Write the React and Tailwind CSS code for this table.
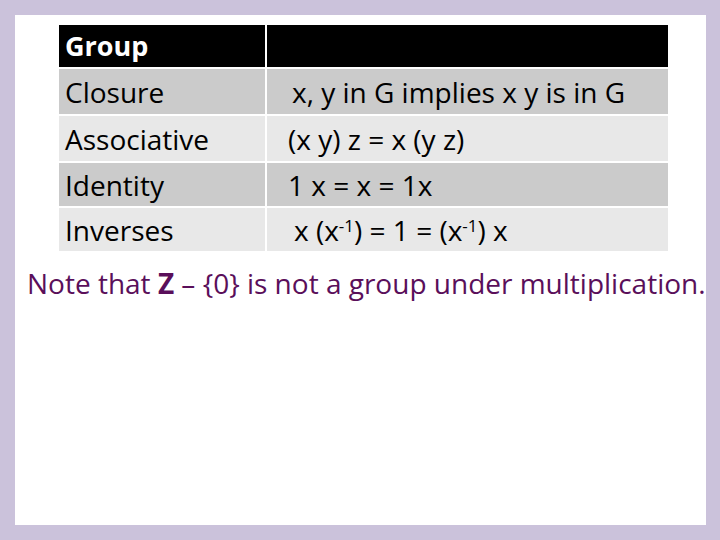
import React from "react";

const rows = [
  { name: "Closure", rule: <span className="pl-[5px]">x, y in G implies x y is in G</span>, bg: "bg-[#cbcbcb]", h: "h-[45px]" },
  { name: "Associative", rule: <span className="pl-[1px]">(x y) z = x (y z)</span>, bg: "bg-[#e8e8e8]", h: "h-[45px]" },
  { name: "Identity", rule: <span className="pl-[1px]">1 x = x = 1x</span>, bg: "bg-[#cbcbcb]", h: "h-[43px]" },
  {
    name: "Inverses",
    rule: (
      <span className="pl-[7px]">
        x (x<sup className="text-[17px]">-1</sup>) = 1 = (x<sup className="text-[17px]">-1</sup>) x
      </span>
    ),
    bg: "bg-[#e8e8e8]",
    h: "h-[43px]",
  },
];

const App = () => {
  return (
    <div className="w-[720px] h-[540px] bg-[#cbc2db] pt-[15px] pl-[15px] pr-[14px] pb-[15px] font-['Open_Sans',sans-serif]">
      <div className="w-full h-full bg-white pt-[10px]">
        <div className="ml-[44px] w-[609px] grid grid-cols-[206px_401px] gap-x-[2px] gap-y-[2px]">
          <div className="h-[42px] bg-black text-white font-bold text-[27px] flex items-center pl-[6px]">
            Group
          </div>
          <div className="h-[42px] bg-black" />
          {rows.map((r) => (
            <React.Fragment key={r.name}>
              <div className={`${r.h} ${r.bg} text-[28px] leading-none text-black flex items-center pl-[6px]`}>
                {r.name}
              </div>
              <div className={`${r.h} ${r.bg} text-[28px] leading-none text-black flex items-center pl-[20px]`}>
                {r.rule}
              </div>
            </React.Fragment>
          ))}
        </div>
        <p className="mt-[15px] ml-[12px] text-[28px] leading-[34px] text-[#5a0f5a] whitespace-nowrap">
          Note that <b>Z</b> – {"{0}"} is not a group under multiplication.
        </p>
      </div>
    </div>
  );
};

export default App;
